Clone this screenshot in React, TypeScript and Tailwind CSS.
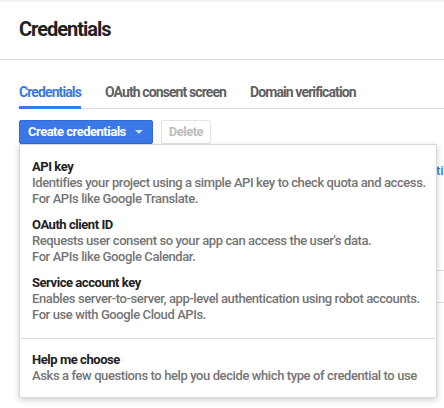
const items = [
  {
    title: "API key",
    lines: [
      "Identifies your project using a simple API key to check quota and access.",
      "For APIs like Google Translate.",
    ],
  },
  {
    title: "OAuth client ID",
    lines: [
      "Requests user consent so your app can access the user's data.",
      "For APIs like Google Calendar.",
    ],
  },
  {
    title: "Service account key",
    lines: [
      "Enables server-to-server, app-level authentication using robot accounts.",
      "For use with Google Cloud APIs.",
    ],
  },
];

function MenuItem({ title, lines }: { title: string; lines: string[] }) {
  return (
    <div className="px-3 py-[5px] cursor-pointer whitespace-nowrap">
      <div className="font-bold text-[#212121] tracking-[-0.45px]">{title}</div>
      {lines.map((l) => (
        <div key={l} className="font-medium text-[#757575] tracking-[-0.4px]">
          {l}
        </div>
      ))}
    </div>
  );
}

export default function App() {
  return (
    <div className="w-[444px] h-[408px] overflow-hidden bg-white font-['Roboto','Liberation_Sans',sans-serif]">
      <div className="h-[2px] bg-[#f2f2f2]"></div>
      <div className="border-b border-[#dcdcdc] px-[19px] pt-[13px] pb-[16px]">
        <h1 className="text-[20px] leading-7 font-bold text-[#212121] tracking-[-1px]">Credentials</h1>
      </div>

      <div className="pl-[19px]">
        <div className="mt-[22px] flex gap-6 border-b border-[#dcdcdc] text-[14px] leading-5 font-bold text-[#616161] tracking-[-0.9px]">
          <div className="pb-[4px] border-b-[3px] border-[#3b78e7] -mb-px text-[#3b78e7]">Credentials</div>
          <div className="pb-[4px]">OAuth consent screen</div>
          <div className="pb-[4px]">Domain verification</div>
        </div>

        <div className="relative mt-[11px]">
          <div className="flex gap-2">
            <button className="h-6 flex items-center gap-[9px] pl-2 pr-[9px] rounded-[2px] border border-[#2f6ad8] bg-[#3b78e7] text-white text-[13px] font-bold tracking-[-0.5px]">
              Create credentials
              <svg width="8" height="4" viewBox="0 0 8 4">
                <path d="M0 0h8L4 4z" fill="#c9dafa" />
              </svg>
            </button>
            <button className="h-6 px-[7px] rounded-[2px] border border-[#e3e3e3] bg-white text-[#bdbdbd] text-[13px] font-bold tracking-[-0.5px]">
              Delete
            </button>
          </div>

          {/* conteudo de fundo, tapado pelo menu */}
          <div className="mt-[19px] whitespace-nowrap text-[13px] leading-4 font-medium text-[#757575]">
            <span className="inline-block w-[417px]"></span>
            <span className="text-[#3b78e7]">ti</span>
          </div>
          <div className="mt-[91px] border-t border-[#e0e0e0]"></div>
          <div className="mt-[31px] border-t border-[#e0e0e0]"></div>

          <div className="absolute left-0 top-6 w-[418px] bg-white border border-[#dadada] shadow-[0_2px_6px_rgba(0,0,0,0.2)] text-[13px] leading-4">
            <div className="pt-[9px] pb-[10px]">
              {items.map((it) => (
                <MenuItem key={it.title} title={it.title} lines={it.lines} />
              ))}
            </div>
            <div className="border-t border-[#e0e0e0]"></div>
            <div className="pt-2 pb-2">
              <MenuItem
                title="Help me choose"
                lines={["Asks a few questions to help you decide which type of credential to use"]}
              />
            </div>
          </div>
        </div>
      </div>
    </div>
  );
}
